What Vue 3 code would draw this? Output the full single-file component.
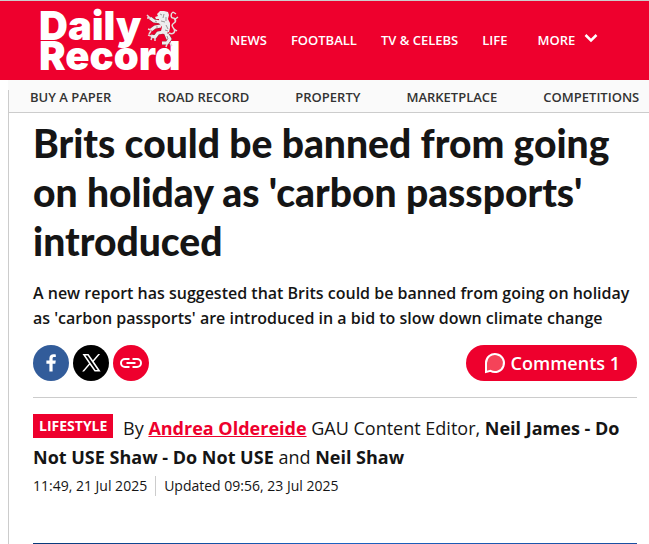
<template>
  <div class="site">
    <header class="masthead">
      <!-- logo -->
      <a href="#" class="logo" aria-label="Daily Record">
        <svg width="146" height="76" viewBox="0 0 146 76">
          <text class="logo-text" x="-2" y="37">Daily</text>
          <text class="logo-text" x="-2" y="67">Record</text>
          <!-- lion rampant -->
          <g class="lion" transform="translate(103 6)">
            <path class="edge" d="M19 5L18 12L22 18L21 23L24 30M17 13L10 12L6 9M17 17L11 18L7 21M20 23L14 24L11 28L7 27M23 25L26 30L23 34L18 34" />
            <path class="limb" d="M19 5L18 12L22 18L21 23L24 30M17 13L10 12L6 9M17 17L11 18L7 21M20 23L14 24L11 28L7 27M23 25L26 30L23 34L18 34" />
            <path class="body" d="M13 5l3-3 4 0 4 1 1 3-1 4 2 4 0 5-1 4-5 2-3-3 1-4-3-4 0-4-3 0-1-2 3-1z" />
            <path class="tail" d="M25 24c4 2 7-1 5-4s-3-4 0-6 1-5-1-5-3-4 0-6M29 3l3 2M30 11l4-3M30 20l3 2M26 34l2 3M23 35l-1 3M6 9L3 6M6 9L3 9M7 21l-3-1M7 22l-2 3M7 27l-3-1M8 28l-1 3M11 29l0 3" />
            <path class="detail" d="M16 5l2 1M20 5l-1 4M22 8l0 4M17 12l4 1M22 16l2 4M21 21l3 1M23 27l1 3M11 12l2 1M12 18l2 0" />
          </g>
        </svg>
      </a>
      <nav class="main-nav">
        <a v-for="item in mainLinks" :key="item" href="#">{{ item }}</a>
        <button type="button" class="more">
          MORE
          <svg width="14" height="10" viewBox="0 0 14 10">
            <path d="M1.500 2l5.500 5.500 5.500-5.500" />
          </svg>
        </button>
      </nav>
    </header>

    <nav class="sub-nav">
      <a v-for="item in subLinks" :key="item" href="#">{{ item }}</a>
    </nav>

    <main class="article">
      <h1>Brits could be banned from going on holiday as 'carbon passports' introduced</h1>
      <p class="lead">
        A new report has suggested that Brits could be banned from going on holiday as 'carbon
        passports' are introduced in a bid to slow down climate change
      </p>

      <div class="actions">
        <div class="share">
          <button type="button" class="round facebook" aria-label="Facebook">
            <svg width="36" height="36" viewBox="0 0 36 36">
              <path d="M16.4 26.500v-7.800h-3v-3.200h3v-2.200c0-2.700 1.700-4 4.200-4 1 0 1.800.1 2.200.1v2.700h-1.600c-1.300 0-1.600.6-1.600 1.500v1.900h3.200l-.5 3.200h-2.700v7.800z" />
            </svg>
          </button>
          <button type="button" class="round x" aria-label="X">
            <svg width="36" height="36" viewBox="0 0 36 36">
              <path fill-rule="evenodd" d="M9.5 9h6l4.400 6.200L25.200 9h1.900l-6.300 7.400L27.600 26.500h-6l-4.800-6.700L11 26.500H9.100l6.900-8zM12.400 10.500l10 14.500h2.200l-10-14.500z" />
            </svg>
          </button>
          <button type="button" class="round link" aria-label="Copy link">
            <svg width="36" height="36" viewBox="0 0 36 36">
              <path d="M16.500 14H12a4 4 0 0 0 0 8h4.500M19.500 14H24a4 4 0 0 1 0 8h-4.500M13.500 18h9" />
            </svg>
          </button>
        </div>
        <button type="button" class="comments">
          <svg width="22" height="22" viewBox="0 0 22 22">
            <path d="M2 20V11a9 9 0 1 1 4.500 7.800z" />
          </svg>
          Comments {{ commentCount }}
        </button>
      </div>

      <div class="byline">
        <a href="#" class="tag">LIFESTYLE</a>
        By <a href="#" class="author">Andrea Oldereide</a> GAU Content Editor,
        <b>Neil James - Do Not USE Shaw - Do Not USE</b> and <b>Neil Shaw</b>
      </div>
      <div class="dates">
        <time>11:49, 21 Jul 2025</time>
        <time>Updated 09:56, 23 Jul 2025</time>
      </div>

      <!-- top edge of the lead media -->
      <div class="media"></div>
    </main>
  </div>
</template>

<script setup>
import { ref } from 'vue'

const mainLinks = ['NEWS', 'FOOTBALL', 'TV & CELEBS', 'LIFE']
const subLinks = ['BUY A PAPER', 'ROAD RECORD', 'PROPERTY', 'MARKETPLACE', 'COMPETITIONS']

const commentCount = ref(1)
</script>

<style>
body {
  background: #fff;
}
</style>

<style scoped>
.site {
  font-family: 'Open Sans', 'Noto Sans', sans-serif;
  color: #151515;
  overflow: hidden;
}

a {
  color: inherit;
  text-decoration: none;
}

button {
  border: 0;
  padding: 0;
  background: none;
  color: inherit;
  font: inherit;
  cursor: pointer;
}

svg {
  display: block;
  overflow: visible;
}

.masthead {
  display: flex;
  align-items: center;
  gap: 43px;
  height: 79px;
  padding-left: 41px;
  border-top: 1px solid #ccc;
  background: #ee002d;
  color: #fff;
}

.logo-text {
  font: 900 40px Inter, 'Liberation Sans', sans-serif;
  fill: #fff;
}

.lion path {
  fill: none;
  stroke-linejoin: round;
}

.lion .edge {
  stroke: #8c3440;
  stroke-width: 4;
}

.lion .limb {
  stroke: #eee;
  stroke-width: 3;
}

.lion .body {
  fill: #eee;
}

.lion .tail {
  stroke: #e5dcdc;
  stroke-width: 1.5;
}

.lion .detail {
  stroke: #999;
  stroke-width: 1;
}

.main-nav {
  display: flex;
  gap: 24px;
  padding-bottom: 2px;
  font-size: 13px;
  font-weight: 600;
  white-space: nowrap;
}

.more {
  display: flex;
  gap: 9px;
  margin-left: 6px;
}

.more svg {
  margin-top: 2px;
  fill: none;
  stroke: #fff;
  stroke-width: 2.5;
}

.sub-nav {
  display: flex;
  gap: 46px;
  margin-left: 8px;
  padding: 2px 0 0 22px;
  border-bottom: 1px solid #ccc;
  background: linear-gradient(#ccc, #ccc) 0 10px / 1px 100% no-repeat #fafafa;
  color: #333;
  font-size: 13px;
  font-weight: 600;
  line-height: 30px;
  white-space: nowrap;
}

.article {
  margin-left: 8px;
  padding: 6px 12px 0 24px;
  border-left: 1px solid #ccc;
}

h1 {
  margin: 0;
  font: 900 39px/49px 'Lato', sans-serif;
}

.lead {
  margin: 15px 0 14px;
  font-size: 16px;
  font-weight: 600;
  line-height: 25px;
}

.actions {
  display: flex;
  justify-content: space-between;
  padding-bottom: 16px;
  border-bottom: 1px solid #ccc;
}

.share {
  display: flex;
  gap: 4px;
}

.round {
  width: 36px;
  height: 36px;
  border-radius: 50%;
  fill: #fff;
}

.facebook {
  background: #325c9a;
}

.x {
  background: #000;
}

.link {
  background: #ee002d;
  fill: none;
  stroke: #fff;
  stroke-width: 2;
}

.comments {
  display: flex;
  align-items: center;
  gap: 5px;
  height: 36px;
  padding: 0 17px 0 18px;
  border-radius: 18px;
  background: #ee002d;
  color: #fff;
  font-size: 18px;
  font-weight: 600;
}

.comments svg {
  fill: #f54359;
  stroke: #fff;
  stroke-width: 2;
}

.byline {
  margin-top: 16px;
  font-size: 18px;
  line-height: 29px;
}

.tag {
  display: inline-block;
  margin-right: 5px;
  padding: 0 6px;
  background: #ee002d;
  color: #fff;
  font-size: 14px;
  font-weight: 700;
  line-height: 24px;
  vertical-align: 4px;
}

.author {
  color: #ee002d;
  font-weight: 700;
  text-decoration: underline;
}

.dates {
  display: flex;
  margin-top: 4px;
  font-size: 14px;
  line-height: 20px;
}

.dates time + time {
  margin-left: 8px;
  padding-left: 8px;
  border-left: 1px solid #ccc;
}

.media {
  height: 1px;
  margin-top: 47px;
  background: linear-gradient(90deg, #083878, #1c62c2 50%, #1a4fa0);
}
</style>
